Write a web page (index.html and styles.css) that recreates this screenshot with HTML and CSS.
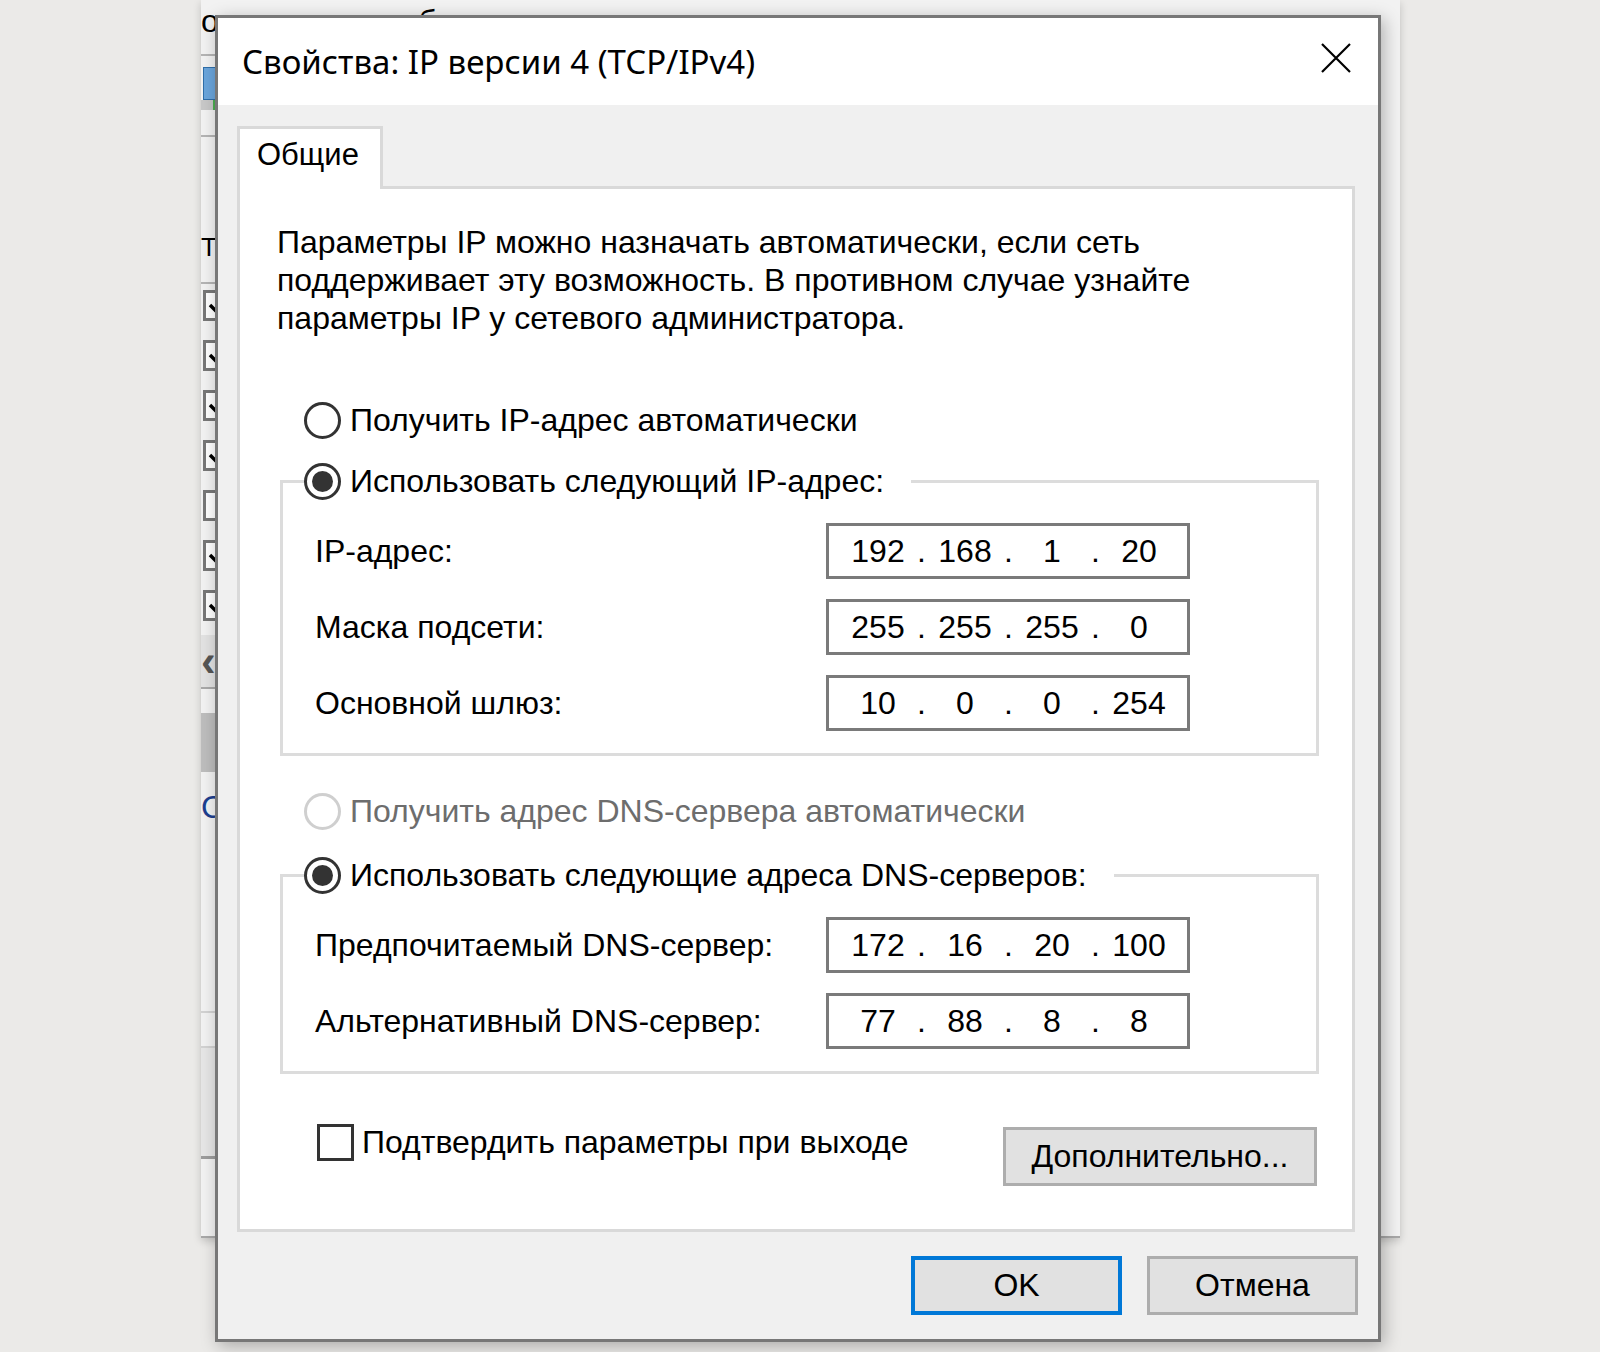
FILE: index.html
```html
<!DOCTYPE html>
<html lang="ru">
<head>
    <meta charset="UTF-8">
    <meta name="viewport" content="width=device-width, initial-scale=1.0">
    <title>Свойства: IP версии 4 (TCP/IPv4)</title>
    <link rel="stylesheet" href="styles.css">
</head>
<body>

<div class="desk">

    <!-- Window behind the dialog (only its edges are visible) -->
    <div class="behind">
        <div class="bh-head">отключение кабеля</div>
        <div class="bh-rule rule-a"></div>
        <div class="bh-icon"></div>
        <div class="bh-progress"></div>
        <div class="bh-rule rule-b"></div>
        <div class="bh-caption">Т</div>
        <div class="bh-rule rule-c"></div>
        <ul class="bh-list">
            <li class="bh-check on"><svg viewBox="0 0 25 25" width="25" height="25"><path d="M4 12 L10 18 L22 6" fill="none" stroke="#000" stroke-width="3.5"/></svg></li>
            <li class="bh-check on"><svg viewBox="0 0 25 25" width="25" height="25"><path d="M4 12 L10 18 L22 6" fill="none" stroke="#000" stroke-width="3.5"/></svg></li>
            <li class="bh-check on"><svg viewBox="0 0 25 25" width="25" height="25"><path d="M4 12 L10 18 L22 6" fill="none" stroke="#000" stroke-width="3.5"/></svg></li>
            <li class="bh-check on"><svg viewBox="0 0 25 25" width="25" height="25"><path d="M4 12 L10 18 L22 6" fill="none" stroke="#000" stroke-width="3.5"/></svg></li>
            <li class="bh-check"></li>
            <li class="bh-check on"><svg viewBox="0 0 25 25" width="25" height="25"><path d="M4 12 L10 18 L22 6" fill="none" stroke="#000" stroke-width="3.5"/></svg></li>
            <li class="bh-check on"><svg viewBox="0 0 25 25" width="25" height="25"><path d="M4 12 L10 18 L22 6" fill="none" stroke="#000" stroke-width="3.5"/></svg></li>
        </ul>
        <div class="bh-scroll">&lsaquo;</div>
        <div class="bh-block"></div>
        <div class="bh-caption2">С</div>
        <div class="bh-rule rule-d"></div>
        <div class="bh-rule rule-e"></div>
        <div class="bh-shade"></div>
        <div class="bh-edge"></div>
    </div>

    <!-- Dialog -->
    <div class="dialog">
        <div class="titlebar">
            <span class="title">Свойства: IP версии 4 (TCP/IPv4)</span>
            <span class="close">
                <svg viewBox="0 0 30 30" width="30" height="30"><path d="M1 1 L29 29 M29 1 L1 29" fill="none" stroke="#000" stroke-width="2.2"/></svg>
            </span>
        </div>

        <div class="dlg-body">
            <div class="tab">Общие</div>

            <div class="panel">
                <p class="intro">Параметры IP можно назначать автоматически, если сеть<br>поддерживает эту возможность. В противном случае узнайте<br>параметры IP у сетевого администратора.</p>

                <div class="radio radio-first"><span class="circle"></span>Получить IP-адрес автоматически</div>

                <fieldset class="group">
                    <legend><span class="radio checked"><span class="circle"></span>Использовать следующий IP-адрес:</span></legend>
                    <div class="fields">
                        <span class="field-label">IP-адрес:</span>
                        <div class="ip"><span>192</span><i>.</i><span>168</span><i>.</i><span>1</span><i>.</i><span>20</span></div>
                        <span class="field-label">Маска подсети:</span>
                        <div class="ip"><span>255</span><i>.</i><span>255</span><i>.</i><span>255</span><i>.</i><span>0</span></div>
                        <span class="field-label">Основной шлюз:</span>
                        <div class="ip"><span>10</span><i>.</i><span>0</span><i>.</i><span>0</span><i>.</i><span>254</span></div>
                    </div>
                </fieldset>

                <div class="radio radio-dns disabled"><span class="circle"></span>Получить адрес DNS-сервера автоматически</div>

                <fieldset class="group group-dns">
                    <legend><span class="radio checked"><span class="circle"></span>Использовать следующие адреса DNS-серверов:</span></legend>
                    <div class="fields">
                        <span class="field-label">Предпочитаемый DNS-сервер:</span>
                        <div class="ip"><span>172</span><i>.</i><span>16</span><i>.</i><span>20</span><i>.</i><span>100</span></div>
                        <span class="field-label">Альтернативный DNS-сервер:</span>
                        <div class="ip"><span>77</span><i>.</i><span>88</span><i>.</i><span>8</span><i>.</i><span>8</span></div>
                    </div>
                </fieldset>

                <div class="panel-foot">
                    <div class="check"><span class="box"></span>Подтвердить параметры при выходе</div>
                    <button class="btn btn-more">Дополнительно...</button>
                </div>
            </div>

            <div class="dlg-buttons">
                <button class="btn btn-dlg default">OK</button>
                <button class="btn btn-dlg">Отмена</button>
            </div>
        </div>
    </div>

</div>

</body>
</html>
```

FILE: styles.css
```css
body {
    margin: 0;
    background-color: #ebeae8;
    font-family: "Liberation Sans", Arial, sans-serif;
    color: #000;
}

.desk {
    position: relative;
    width: 1600px;
    height: 1352px;
    overflow: hidden;
}

/* ---- window behind ---- */

.behind {
    position: absolute;
    left: 201px;
    top: 0;
    width: 1199px;
    height: 1238px;
    background-color: #f2f2f2;
    box-shadow: 0 3px 8px rgba(0, 0, 0, 0.18);
}

.bh-head {
    margin-top: 4px;
    font-size: 32px;
    line-height: 34px;
    white-space: nowrap;
}

.bh-rule {
    width: 120px;
    height: 2px;
    background-color: #b4b4b4;
}

.rule-a { margin-top: 16px; }
.rule-b { margin-top: 25px; }
.rule-c { margin-top: 20px; }
.rule-d { margin-top: 187px; background-color: #d2d2d2; }
.rule-e { margin-top: 33px; background-color: #d2d2d2; }

.bh-icon {
    margin: 11px 0 0 2px;
    width: 40px;
    height: 31px;
    background-color: #6aa5dc;
    border: 1px solid #2f6ea9;
}

.bh-progress {
    width: 120px;
    height: 10px;
    background: linear-gradient(to right, #c8c8c8 12px, #4caf50 12px, #4caf50 16px, #c8c8c8 16px);
}

.bh-caption {
    margin-top: 95px;
    font-size: 26px;
    line-height: 30px;
}

.bh-list {
    list-style: none;
    margin: 6px 0 0 2px;
    padding: 0;
    display: flex;
    flex-direction: column;
    gap: 19px;
}

.bh-check {
    width: 31px;
    height: 31px;
    box-sizing: border-box;
    border: 3px solid #777;
    background-color: #fff;
    display: flex;
    align-items: center;
    justify-content: center;
}

.bh-scroll {
    width: 120px;
    margin-top: 14px;
    height: 52px;
    line-height: 52px;
    background-color: #e2e2e2;
    border-bottom: 2px solid #a8a8a8;
    font-size: 44px;
    font-weight: bold;
    color: #555;
}

.bh-block {
    width: 120px;
    margin-top: 24px;
    height: 59px;
    background-color: #bdbdbd;
}

.bh-caption2 {
    margin-top: 18px;
    font-size: 32px;
    line-height: 34px;
    color: #1d3f8f;
}

.bh-shade {
    width: 120px;
    height: 108px;
    background-color: #e6e6e6;
    border-bottom: 3px solid #9c9c9c;
}

.bh-edge {
    height: 77px;
    border-bottom: 2px solid #a8a8a8;
}

/* ---- dialog ---- */

.dialog {
    position: absolute;
    left: 215px;
    top: 15px;
    width: 1166px;
    height: 1327px;
    box-sizing: border-box;
    border: 3px solid #777;
    background-color: #f0f0f0;
    box-shadow: 3px 4px 16px rgba(0, 0, 0, 0.28);
    display: flex;
    flex-direction: column;
}

.titlebar {
    height: 87px;
    flex-shrink: 0;
    background-color: #fff;
    display: flex;
    align-items: center;
    justify-content: space-between;
    padding: 0 27px 0 24px;
}

.title {
    font-family: "Noto Sans", sans-serif;
    font-size: 33px;
    white-space: nowrap;
}

.close {
    width: 30px;
    height: 30px;
    margin-top: -7px;
}

.dlg-body {
    flex: 1;
    display: flex;
    flex-direction: column;
    padding: 21px 23px 0 19px;
}

.tab {
    position: relative;
    z-index: 1;
    align-self: flex-start;
    width: 146px;
    height: 63px;
    box-sizing: border-box;
    margin-bottom: -3px;
    padding: 0 0 8px 17px;
    border: 3px solid #d9d9d9;
    border-bottom: 0;
    background-color: #fff;
    font-size: 31px;
    line-height: 52px;
}

.panel {
    height: 1046px;
    box-sizing: border-box;
    border: 3px solid #d9d9d9;
    background-color: #fff;
    padding: 34px 33px 0 37px;
}

.intro {
    margin: 0;
    font-size: 32px;
    line-height: 38px;
    white-space: nowrap;
}

.radio {
    display: flex;
    align-items: center;
    gap: 9px;
    height: 40px;
    margin-left: 27px;
    font-size: 32px;
    white-space: nowrap;
}

.radio-first {
    margin-top: 63px;
}

.radio-dns {
    margin-top: 35px;
}

.circle {
    width: 37px;
    height: 37px;
    box-sizing: border-box;
    border: 3px solid #333;
    border-radius: 50%;
    background-color: #fff;
    display: flex;
    align-items: center;
    justify-content: center;
}

.checked .circle::after {
    content: "";
    width: 21px;
    height: 21px;
    border-radius: 50%;
    background-color: #333;
}

.disabled {
    color: #6d6d6d;
}

.disabled .circle {
    border-color: #cfcfcf;
}

.group {
    margin: 21px 0 0 3px;
    padding: 0;
    min-width: 0;
    border: 3px solid #dcdcdc;
}

.group-dns {
    margin-top: 24px;
}

.group legend {
    margin-left: 21px;
    padding: 0 27px 0 0;
}

.group legend .radio {
    margin-left: 0;
}

.fields {
    display: grid;
    grid-template-columns: 511px 364px;
    row-gap: 20px;
    align-items: center;
    padding: 22px 0 22px 32px;
    font-size: 32px;
}

.field-label {
    white-space: nowrap;
}

.ip {
    height: 56px;
    box-sizing: border-box;
    border: 3px solid #7a7a7a;
    background-color: #fff;
    display: flex;
    align-items: center;
    padding: 0 13px 0 14px;
}

.ip span {
    width: 70px;
    text-align: center;
}

.ip i {
    width: 17px;
    text-align: center;
    font-style: normal;
}

.panel-foot {
    display: flex;
    justify-content: space-between;
    align-items: flex-start;
    margin: 50px 2px 0 0;
}

.check {
    display: flex;
    align-items: center;
    gap: 8px;
    margin-left: 40px;
    font-size: 32px;
    white-space: nowrap;
}

.box {
    width: 37px;
    height: 37px;
    box-sizing: border-box;
    border: 3px solid #333;
    background-color: #fff;
}

.btn {
    height: 59px;
    padding: 0;
    box-sizing: border-box;
    border: 3px solid #adadad;
    background-color: #e1e1e1;
    font-family: inherit;
    font-size: 32px;
    color: #000;
}

.btn-more {
    width: 314px;
    margin-top: 3px;
}

.dlg-buttons {
    display: flex;
    justify-content: flex-end;
    gap: 25px;
    margin: 24px -3px 0 0;
}

.btn-dlg {
    width: 211px;
}

.btn.default {
    border: 4px solid #0078d7;
}
```
